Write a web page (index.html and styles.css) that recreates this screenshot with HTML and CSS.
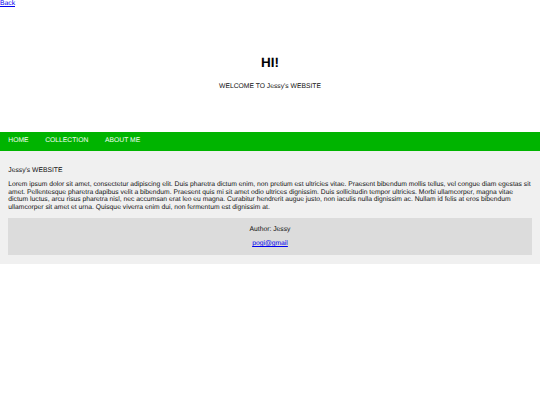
FILE: index.html
```html
<!DOCTYPE html>
<html lang="en">
<head>
<meta charset="utf-8">
<title>Jessy's WEBSITE</title>
<link rel="stylesheet" href="styles.css">
</head>
<body>
<a class="back" href="#">Back</a>
<header class="hero">
  <h1 class="hero-title">HI!</h1>
  <p class="hero-sub">WELCOME TO Jessy's WEBSITE</p>
</header>
<nav class="menu">
  <a class="menu-link" href="#">HOME</a>
  <a class="menu-link" href="#">COLLECTION</a>
  <a class="menu-link" href="#">ABOUT ME</a>
</nav>
<main class="content">
  <p class="content-title">Jessy's WEBSITE</p>
  <p class="content-text">Lorem ipsum dolor sit amet, consectetur adipiscing elit. Duis pharetra dictum enim, non pretium est ultricies vitae. Praesent bibendum mollis tellus, vel congue diam egestas sit amet. Pellentesque pharetra dapibus velit a bibendum. Praesent quis mi sit amet odio ultrices dignissim. Duis sollicitudin tempor ultricies. Morbi ullamcorper, magna vitae dictum luctus, arcu risus pharetra nisl, nec accumsan erat leo eu magna. Curabitur hendrerit augue justo, non iaculis nulla dignissim ac. Nullam id felis at eros bibendum ullamcorper sit amet et urna. Quisque viverra enim dui, non fermentum est dignissim at.</p>
  <footer class="author">
    <p class="author-line">Author: Jessy</p>
    <p class="author-line"><a class="author-mail" href="#">pogi@gmail</a></p>
  </footer>
</main>
</body>
</html>
```

FILE: styles.css
```css
html {
  font-size: 6.75px;
}
body {
  margin: 0;
  font-family: "Liberation Sans", Arial, sans-serif;
  font-size: 1rem;
  line-height: 7.667px;
  color: #111;
  background: #fff;
  text-rendering: geometricPrecision;
}
.back {
  display: block;
  width: max-content;
  color: #0000ee;
}
.hero {
  text-align: center;
  padding: 47.2px 0 41.1px;
}
.hero-title {
  margin: 0;
  font-size: 2rem;
  line-height: 15.33px;
  font-weight: bold;
  color: #000;
}
.hero-sub {
  margin: 12.6px 0 0;
}
.menu {
  display: flex;
  align-items: center;
  height: 19px;
  background: #00b400;
}
.menu-link {
  color: #f4fff4;
  text-decoration: none;
  padding: 0 8.3333px;
}
.content {
  background: #f0f0f0;
  padding: 9.3px 8.3333px 8.6px;
}
.content-title {
  margin: 6.6667px 0;
}
.content-text {
  margin: 6.6667px 0;
}
.author {
  background: #dcdcdc;
  text-align: center;
  padding: 0.6px 0;
}
.author-line {
  margin: 6.9px 0;
}
.author-mail {
  color: #0000ee;
}
```
